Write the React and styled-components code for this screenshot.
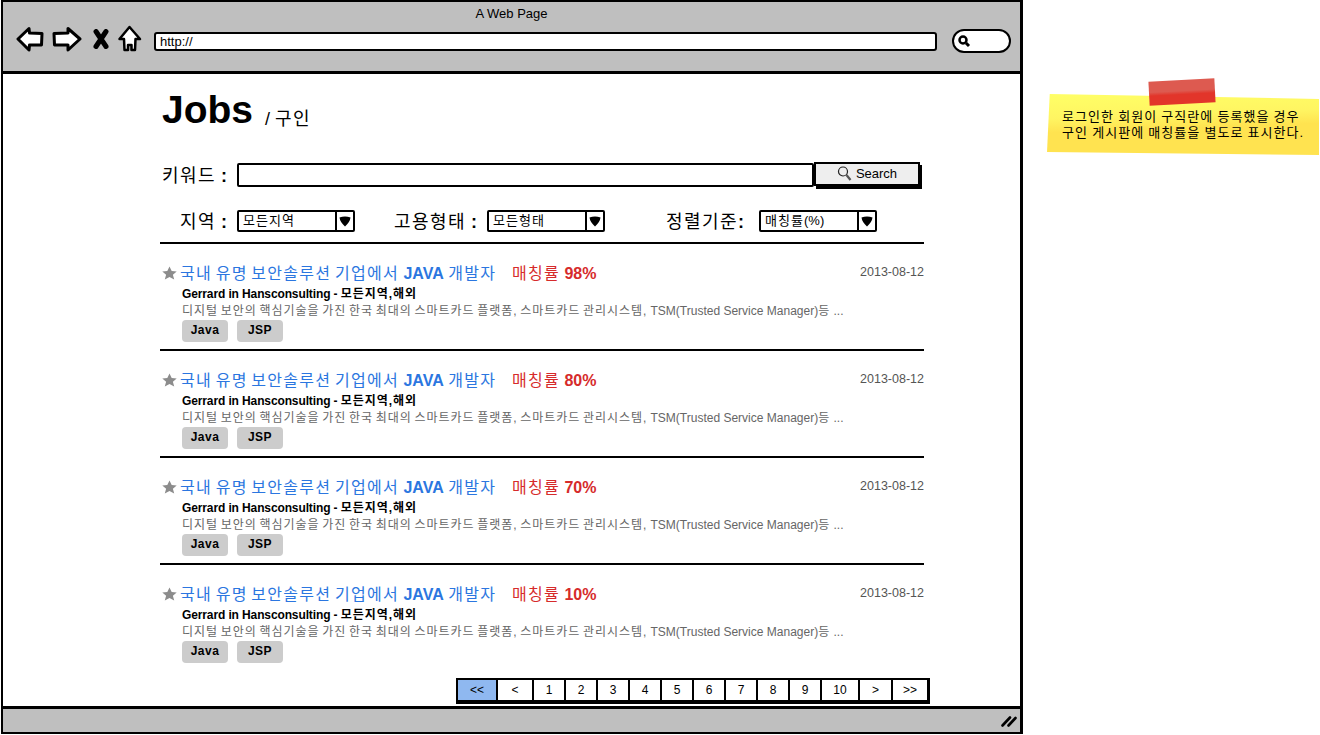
import styled, { createGlobalStyle } from "styled-components";

const GlobalStyle = createGlobalStyle`
    html, body {
        margin: 0;
        padding: 0;
        background: #FFFFFF;
    }
    body {
        font-family: "Liberation Sans", "Noto Sans CJK KR", sans-serif;
        color: #000000;
    }
`;

const jobs = [
    { id: 1, rate: "98%" },
    { id: 2, rate: "80%" },
    { id: 3, rate: "70%" },
    { id: 4, rate: "10%" }
];

const pages = [
    { label: "<<", width: 38 },
    { label: "<", width: 36 },
    { label: "1", width: 32 },
    { label: "2", width: 32 },
    { label: "3", width: 32 },
    { label: "4", width: 32 },
    { label: "5", width: 32 },
    { label: "6", width: 32 },
    { label: "7", width: 32 },
    { label: "8", width: 32 },
    { label: "9", width: 32 },
    { label: "10", width: 38 },
    { label: ">", width: 33 },
    { label: ">>", width: 36 }
];

function BackIcon() {
    return (
        <svg width="28" height="26" viewBox="0 0 28 26">
            <path d="M2 13 L13 2.5 L13.5 7 L26 7.5 L25.5 19 L13.5 19 L13 24 Z" fill="#FFFFFF" stroke="#000000" strokeWidth="3" strokeLinejoin="round" />
        </svg>
    );
}

function ForwardIcon() {
    return (
        <svg width="30" height="26" viewBox="0 0 30 26">
            <path d="M28 13 L16 2.5 L16 7 L2 7.5 L2.5 19 L16 19 L16 24 Z" fill="#FFFFFF" stroke="#000000" strokeWidth="3" strokeLinejoin="round" />
        </svg>
    );
}

function CloseIcon() {
    return (
        <svg width="16" height="20" viewBox="0 0 16 20">
            <path d="M3 2.5 L13 17.5 M13 2.5 L3 17.5" stroke="#000000" strokeWidth="5" strokeLinecap="round" fill="none" />
        </svg>
    );
}

function HomeIcon() {
    return (
        <svg width="24" height="28" viewBox="0 0 24 28">
            <path d="M11.5 2 L22 14 L17.5 14 L17 25 L13.5 25 L13.5 20 L10 20 L10 25 L6.5 25 L6 14 L1.5 14 Z" fill="#FFFFFF" stroke="#000000" strokeWidth="2.5" strokeLinejoin="round" />
        </svg>
    );
}

function SmallLens() {
    return (
        <svg width="14" height="14" viewBox="0 0 14 14">
            <circle cx="6" cy="6" r="3.5" fill="#FFFFFF" stroke="#000000" strokeWidth="2.5" />
            <path d="M9 9 L12 12" stroke="#000000" strokeWidth="3" />
        </svg>
    );
}

function ButtonLens() {
    return (
        <svg width="15" height="17" viewBox="0 0 15 17">
            <circle cx="6" cy="6.5" r="4.5" fill="none" stroke="#222222" strokeWidth="1.2" />
            <path d="M9.5 10 L13.5 15" stroke="#555555" strokeWidth="2.2" />
        </svg>
    );
}

function Star() {
    return (
        <svg width="15" height="14" viewBox="0 0 15 14">
            <path d="M7.5 0.5 L9.7 5 L14.7 5.4 L10.9 8.7 L12.2 13.6 L7.5 11 L2.8 13.6 L4.1 8.7 L0.3 5.4 L5.3 5 Z" fill="#8C8C8C" />
        </svg>
    );
}

function Grip() {
    return (
        <svg width="16" height="12" viewBox="0 0 16 12">
            <path d="M1.5 10.5 L9 2.5 M7.5 10.5 L14.5 3" stroke="#000000" strokeWidth="2.6" strokeLinecap="round" fill="none" />
        </svg>
    );
}

function Select({ children }) {
    return (
        <SelectBox>
            <SelectValue>{children}</SelectValue>
            <SelectArrow>
                <svg width="12" height="11" viewBox="0 0 12 11">
                    <path d="M0.5 1.5 Q6 -0.5 11.5 1.5 Q11 6 6 10.5 Q1 6 0.5 1.5 Z" fill="#000000" />
                </svg>
            </SelectArrow>
        </SelectBox>
    );
}

function JobRow({ rate }) {
    return (
        <Job>
            <TitleRow>
                <Star />
                <JobTitle><Ko>국내 유명 보안솔루션 기업에서</Ko> <b>JAVA</b> <Ko>개발자</Ko></JobTitle>
                <Match><Ko>매칭률</Ko> <b>{rate}</b></Match>
                <JobDate>2013-08-12</JobDate>
            </TitleRow>
            <Company>Gerrard in Hansconsulting - <Ko>모든지역,해외</Ko></Company>
            <Summary><Ko>디지털 보안의 핵심기술을 가진 한국 최대의 스마트카드 플랫폼, 스마트카드 관리시스템,</Ko> TSM(Trusted Service Manager)<Ko>등</Ko> ...</Summary>
            <Tags>
                <Tag>Java</Tag>
                <Tag>JSP</Tag>
            </Tags>
        </Job>
    );
}

export default function App() {
    return (
        <>
            <GlobalStyle />
            <Page>
                <Window>
                    <Chrome>
                        <WindowTitle>A Web Page</WindowTitle>
                        <Toolbar>
                            <NavIcons>
                                <BackIcon />
                                <ForwardIcon />
                                <CloseIcon />
                                <HomeIcon />
                            </NavIcons>
                            <UrlBar>http://</UrlBar>
                            <SearchPill><SmallLens /></SearchPill>
                        </Toolbar>
                    </Chrome>

                    <Content>
                        <Heading>
                            <h1>Jobs</h1>
                            <span><b>/</b> <Ko>구인</Ko></span>
                        </Heading>

                        <KeywordRow>
                            <FieldLabel><Ko>키워드</Ko> <b>:</b></FieldLabel>
                            <KeywordInput />
                            <SearchButton><ButtonLens /> Search</SearchButton>
                        </KeywordRow>

                        <FilterRow>
                            <Filter $width={175} $after={39}>
                                <FieldLabel><Ko>지역</Ko> <b>:</b></FieldLabel>
                                <Select><Ko>모든지역</Ko></Select>
                            </Filter>
                            <Filter $width={211} $after={61}>
                                <FieldLabel><Ko>고용형태</Ko> <b>:</b></FieldLabel>
                                <Select><Ko>모든형태</Ko></Select>
                            </Filter>
                            <Filter $width={211} $after={0}>
                                <FieldLabel><Ko>정렬기준</Ko><b>:</b></FieldLabel>
                                <Select><Ko>매칭률</Ko>(%)</Select>
                            </Filter>
                        </FilterRow>

                        <JobList>
                            {jobs.map(job => <JobRow key={job.id} rate={job.rate} />)}
                        </JobList>

                        <Pagination>
                            {pages.map((page, index) => (
                                <PageCell key={page.label} $width={page.width} $active={index === 0}>{page.label}</PageCell>
                            ))}
                        </Pagination>
                    </Content>

                    <StatusBar><Grip /></StatusBar>
                </Window>

                <Note>
                    <Tape />
                    <NoteText><Ko>로그인한 회원이 구직란에 등록했을 경우</Ko></NoteText>
                    <NoteText><Ko>구인 게시판에 매칭률을 별도로 표시한다.</Ko></NoteText>
                </Note>
            </Page>
        </>
    );
}

// the reference font has square hangul, Noto's is a bit narrower
const Ko = styled.span`
    letter-spacing: 0.08em;
    word-spacing: -0.13em;
`;

const Page = styled.div`
    width: 1320px;
    height: 735px;
    padding: 0 0 0 1px;
    box-sizing: border-box;
    overflow: hidden;
    display: flex;
    align-items: flex-start;
`;

const Window = styled.div`
    width: 1022px;
    height: 734px;
    box-sizing: border-box;
    border: 2px solid #000000;
    border-right-width: 3px;
    display: flex;
    flex-direction: column;
    flex-shrink: 0;
`;

// Browser chrome

const Chrome = styled.div`
    height: 72px;
    box-sizing: border-box;
    flex-shrink: 0;
    background: #BFBFBF;
    border-bottom: 3px solid #000000;
`;

const WindowTitle = styled.div`
    padding-top: 4px;
    text-align: center;
    font-size: 13px;
    line-height: 15px;
`;

const Toolbar = styled.div`
    display: flex;
    align-items: center;
    padding: 3px 0 0 13px;
`;

const NavIcons = styled.div`
    display: flex;
    align-items: center;
    gap: 8px;
    svg:nth-child(3) {
        margin-left: 3px;
    }
    svg:nth-child(4) {
        margin-left: 1px;
    }
`;

const UrlBar = styled.div`
    width: 783px;
    height: 19px;
    margin: 5px 0 0 12px;
    padding-left: 4px;
    box-sizing: border-box;
    background: #FFFFFF;
    border: 2px solid #000000;
    border-radius: 3px;
    font-size: 13px;
    line-height: 15px;
`;

const SearchPill = styled.div`
    width: 59px;
    height: 24px;
    margin: 5px 0 0 15px;
    padding-left: 3px;
    box-sizing: border-box;
    display: flex;
    align-items: center;
    background: #FFFFFF;
    border: 2px solid #000000;
    border-radius: 12px;
`;

// Content

const Content = styled.div`
    flex: 1;
    padding: 0 96px 0 157px;
    display: flex;
    flex-direction: column;
`;

const Heading = styled.div`
    height: 59px;
    padding-left: 2px;
    display: flex;
    align-items: flex-end;
    gap: 12px;
    h1 {
        margin: 0;
        font-size: 39px;
        line-height: 46px;
        font-weight: 700;
    }
    span {
        font-size: 18px;
        line-height: 28px;
    }
    span b {
        font-weight: 400;
    }
`;

const FieldLabel = styled.span`
    padding-top: 3px;
    font-size: 18px;
    line-height: 21px;
    white-space: nowrap;
    b {
        font-weight: 700;
    }
`;

const KeywordRow = styled.div`
    margin-top: 30px;
    padding-left: 2px;
    display: flex;
    align-items: center;
    gap: 10px;
`;

const KeywordInput = styled.div`
    width: 577px;
    height: 24px;
    box-sizing: border-box;
    background: #FFFFFF;
    border: 2px solid #000000;
    border-radius: 2px;
`;

const SearchButton = styled.div`
    width: 106px;
    height: 24px;
    margin: -2px 0 0 -10px;
    box-sizing: border-box;
    display: flex;
    align-items: center;
    justify-content: center;
    gap: 4px;
    padding-bottom: 2px;
    background: #EEEEEE;
    border: 2px solid #000000;
    box-shadow: 2px 3px 0 #000000;
    font-size: 13px;
`;

const FilterRow = styled.div`
    margin-top: 22px;
    padding: 0 0 9px 20px;
    display: flex;
    align-items: center;
    border-bottom: 2px solid #000000;
`;

const Filter = styled.div`
    width: ${props => props.$width}px;
    margin-right: ${props => props.$after}px;
    display: flex;
    align-items: center;
    justify-content: space-between;
`;

const SelectBox = styled.div`
    width: 118px;
    height: 22px;
    box-sizing: border-box;
    display: flex;
    background: #FFFFFF;
    border: 2px solid #000000;
    border-radius: 2px;
    flex-shrink: 0;
`;

const SelectValue = styled.div`
    flex: 1;
    padding-left: 4px;
    font-size: 13px;
    line-height: 18px;
    white-space: nowrap;
`;

const SelectArrow = styled.div`
    width: 18px;
    box-sizing: border-box;
    display: flex;
    align-items: center;
    justify-content: center;
    border-left: 2px solid #000000;
`;

// Job rows

const JobList = styled.div`
    display: flex;
    flex-direction: column;
`;

const Job = styled.div`
    height: 107px;
    box-sizing: border-box;
    padding: 17px 0 0 2px;
    &:not(:last-child) {
        border-bottom: 2px solid #000000;
    }
`;

const TitleRow = styled.div`
    height: 22px;
    display: flex;
    align-items: center;
    svg {
        margin: 1px 3px 0 0;
        flex-shrink: 0;
    }
`;

const JobTitle = styled.div`
    width: 332px;
    font-size: 16px;
    color: #2B76E0;
    white-space: nowrap;
`;

const Match = styled.div`
    font-size: 16px;
    color: #D62B2B;
    white-space: nowrap;
`;

const JobDate = styled.div`
    margin-left: auto;
    font-size: 12.5px;
    color: #555555;
`;

const Company = styled.div`
    margin: 3px 0 0 20px;
    font-size: 12px;
    line-height: 16px;
    font-weight: 700;
    letter-spacing: -0.12px;
`;

const Summary = styled.div`
    margin: 1px 0 0 20px;
    font-size: 12px;
    line-height: 16px;
    color: #666666;
    white-space: nowrap;
`;

const Tags = styled.div`
    margin: 1px 0 0 20px;
    display: flex;
    gap: 9px;
`;

const Tag = styled.div`
    width: 46px;
    height: 22px;
    background: #CCCCCC;
    border-radius: 4px;
    font-size: 12px;
    font-weight: 700;
    letter-spacing: 0.5px;
    line-height: 20px;
    text-align: center;
`;

// Pagination

const Pagination = styled.div`
    margin: 6px -6px 0 0;
    align-self: flex-end;
    display: flex;
    border: 2px solid #000000;
    border-right-width: 3px;
    border-bottom-width: 4px;
    box-sizing: border-box;
    height: 26px;
`;

const PageCell = styled.div`
    width: ${props => props.$width}px;
    box-sizing: border-box;
    background: ${props => props.$active ? "#8FB8F0" : "#FFFFFF"};
    border-left: ${props => props.$active ? "0" : "2px solid #000000"};
    font-size: 12px;
    line-height: 20px;
    text-align: center;
`;

const StatusBar = styled.div`
    height: 26px;
    box-sizing: border-box;
    flex-shrink: 0;
    display: flex;
    align-items: center;
    justify-content: flex-end;
    padding-right: 3px;
    background: #BFBFBF;
    border-top: 3px solid #000000;
`;

// Sticky note

const Note = styled.div`
    position: relative;
    width: 272px;
    height: 61px;
    margin: 94px 0 0 24px;
    padding: 15px 0 0 15px;
    box-sizing: border-box;
    flex-shrink: 0;
    &::before {
        content: "";
        position: absolute;
        inset: 0;
        background: linear-gradient(178deg, #FFFF66 0%, #FFF562 35%, #FFE350 55%, #FFE350 100%);
        clip-path: polygon(1% 0, 100% 8%, 100% 100%, 0 95%);
    }
`;

const NoteText = styled.div`
    position: relative;
    font-size: 13px;
    line-height: 16px;
    white-space: nowrap;
    span {
        word-spacing: -0.04em;
    }
`;

const Tape = styled.div`
    position: absolute;
    top: -14px;
    left: 102px;
    z-index: 1;
    width: 66px;
    height: 24px;
    background: linear-gradient(180deg, #DD5A50 0%, #DD5A50 45%, #E2352A 60%, #E2352A 100%);
    transform: rotate(-3deg);
`;
